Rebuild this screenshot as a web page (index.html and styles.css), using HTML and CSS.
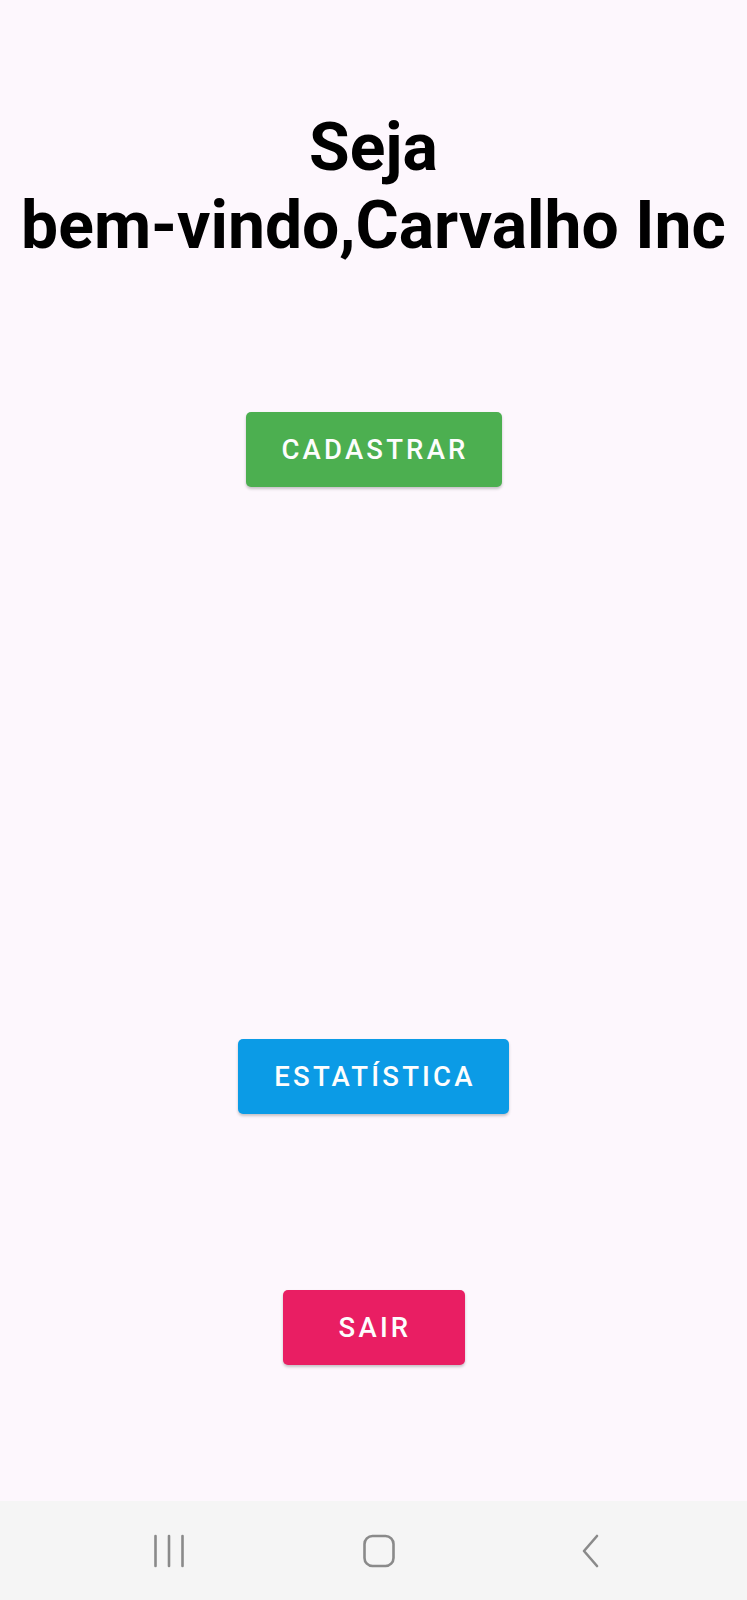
FILE: index.html
```html
<!DOCTYPE html>
<html lang="pt">
<head>
<meta charset="utf-8">
<title>Bem-vindo</title>
<link rel="stylesheet" href="styles.css">
</head>
<body>
<div class="screen">
  <main class="content">
    <h1 class="title"><span class="line">Seja</span><span class="line">bem-vindo,Carvalho Inc</span></h1>
    <button class="btn btn-green btn-cadastrar">CADASTRAR</button>
    <button class="btn btn-blue btn-estat">ESTATÍSTICA</button>
    <button class="btn btn-pink btn-sair">SAIR</button>
  </main>
  <nav class="navbar">
    <svg class="nav-icon" width="34" height="34" viewBox="0 0 34 34">
      <g stroke="#8a8a8a" stroke-width="2.6" stroke-linecap="round">
        <line x1="3.5" y1="2" x2="3.5" y2="32"/>
        <line x1="17" y1="2" x2="17" y2="32"/>
        <line x1="30.5" y1="2" x2="30.5" y2="32"/>
      </g>
    </svg>
    <svg class="nav-icon" width="34" height="34" viewBox="0 0 34 34">
      <rect x="2.5" y="2" width="29" height="30" rx="8" fill="none" stroke="#8a8a8a" stroke-width="2.6"/>
    </svg>
    <svg class="nav-icon" width="34" height="34" viewBox="0 0 34 34">
      <polyline points="25,2 12,17 25,32" fill="none" stroke="#8a8a8a" stroke-width="2.6" stroke-linecap="round" stroke-linejoin="round"/>
    </svg>
  </nav>
</div>
</body>
</html>
```

FILE: styles.css
```css
html, body {
  margin: 0;
  padding: 0;
}
body {
  background: #fdf7fd;
  font-family: Roboto, "Liberation Sans", sans-serif;
}
.screen {
  width: 747px;
  height: 1600px;
  display: flex;
  flex-direction: column;
}
.content {
  flex: 1;
  display: flex;
  flex-direction: column;
  align-items: center;
}
.title {
  margin: 109px 0 0 0;
  font-size: 66px;
  line-height: 78px;
  font-weight: 700;
  color: #000;
  text-align: center;
}
.line {
  display: block;
  white-space: nowrap;
}
.btn {
  border: none;
  border-radius: 5px;
  height: 75px;
  padding: 0 0 0 3px;
  font-family: Roboto, "Liberation Sans", sans-serif;
  font-weight: 500;
  font-size: 27.5px;
  letter-spacing: 3.2px;
  color: #fdfdfd;
  box-shadow: 0 2px 3px rgba(0, 0, 0, 0.22);
}
.btn-green { background: #4caf50; }
.btn-blue { background: #0b9be6; }
.btn-pink { background: #e91e63; }
.btn-cadastrar { margin-top: 147px; width: 256px; }
.btn-estat { margin-top: 552px; width: 271px; }
.btn-sair { margin-top: 176px; width: 182px; }
.navbar {
  height: 99px;
  background: #f5f5f5;
  display: flex;
  align-items: center;
}
.navbar .nav-icon:nth-child(1) { margin-left: 152px; }
.navbar .nav-icon:nth-child(2) { margin-left: 176px; }
.navbar .nav-icon:nth-child(3) { margin-left: 176px; }
.nav-icon {
  display: block;
}
```
